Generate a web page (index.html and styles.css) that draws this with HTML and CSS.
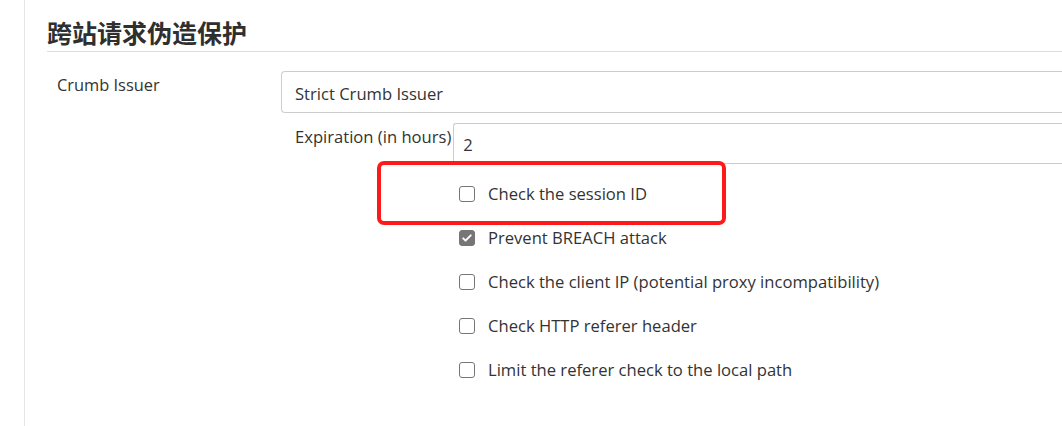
FILE: index.html
```html
<!DOCTYPE html>
<html lang="zh">
<head>
<meta charset="utf-8">
<link rel="stylesheet" href="styles.css">
</head>
<body>
<div class="page">
  <section class="section">
    <h2 class="title">跨站请求伪造保护</h2>
    <div class="row">
      <div class="label">Crumb Issuer</div>
      <div class="field">
        <div class="select">Strict Crumb Issuer</div>
        <div class="sub">
          <div class="sub-row">
            <div class="sub-label">Expiration (in hours)</div>
            <div class="input">2</div>
          </div>
          <ul class="checks">
            <li class="check"><span class="box"></span><span class="txt">Check the session ID</span></li>
            <li class="check"><span class="box on"><svg viewBox="0 0 16 16" width="12" height="12"><path d="M3 8.5l3 3 7-7" fill="none" stroke="#fff" stroke-width="2.6" stroke-linecap="round" stroke-linejoin="round"/></svg></span><span class="txt">Prevent BREACH attack</span></li>
            <li class="check"><span class="box"></span><span class="txt">Check the client IP (potential proxy incompatibility)</span></li>
            <li class="check"><span class="box"></span><span class="txt">Check HTTP referer header</span></li>
            <li class="check"><span class="box"></span><span class="txt">Limit the referer check to the local path</span></li>
          </ul>
        </div>
      </div>
    </div>
  </section>
</div>
<div class="highlight"></div>
</body>
</html>
```
FILE: styles.css
```css
html, body {
  margin: 0;
  padding: 0;
  background: #fff;
  overflow: hidden;
}
body {
  width: 1062px;
  height: 426px;
  font-family: "Open Sans", "Noto Sans", "Noto Sans CJK SC", sans-serif;
  color: #333;
  position: relative;
}
.page {
  margin-left: 24px;
  border-left: 1px solid #e6e6e6;
  height: 426px;
  padding-left: 22px;
  box-sizing: border-box;
}
.section {
  padding-top: 15px;
}
.title {
  margin: 0;
  font-family: "Noto Sans CJK SC", sans-serif;
  font-weight: 700;
  font-size: 25px;
  line-height: 35px;
  color: #2f2f2f;
  border-bottom: 1px solid #ddd;
  padding-bottom: 1px;
}
.row {
  display: flex;
  margin-top: 19px;
}
.label {
  width: 224px;
  padding-left: 10px;
  font-size: 16.4px;
  line-height: 28px;
  flex: none;
}
.field {
  flex: 1;
  min-width: 0;
}
.select {
  height: 42px;
  border: 1px solid #ccc;
  border-right: none;
  border-radius: 4px 0 0 4px;
  box-sizing: border-box;
  padding-left: 13px;
  padding-top: 1px;
  font-size: 16.6px;
  line-height: 42px;
  margin-right: -20px;
}
.sub {
  padding-left: 14px;
}
.sub-row {
  display: flex;
  margin-top: 10px;
}
.sub-label {
  font-size: 16.6px;
  line-height: 28px;
  padding-right: 2px;
  white-space: nowrap;
}
.input {
  flex: 1;
  height: 41px;
  border: 1px solid #ccc;
  border-right: none;
  border-radius: 3px 0 0 0;
  box-sizing: border-box;
  padding-left: 9px;
  padding-top: 9px;
  font-size: 16.6px;
  line-height: 24px;
  margin-right: -20px;
}
.checks {
  list-style: none;
  margin: 8px 0 0 0;
  padding: 0 0 0 164px;
}
.check {
  display: flex;
  align-items: center;
  height: 44px;
}
.box {
  width: 14px;
  height: 14px;
  border: 1px solid #767676;
  border-radius: 3px;
  box-sizing: content-box;
  flex: none;
  display: flex;
  align-items: center;
  justify-content: center;
}
.box.on {
  background: #767676;
}
.txt {
  margin-left: 13px;
  font-size: 16.6px;
  line-height: 24px;
  white-space: nowrap;
}
.highlight {
  position: absolute;
  left: 377px;
  top: 161px;
  width: 349px;
  height: 64px;
  box-sizing: border-box;
  border: 4px solid #ff1a1a;
  border-radius: 7px;
}
```
